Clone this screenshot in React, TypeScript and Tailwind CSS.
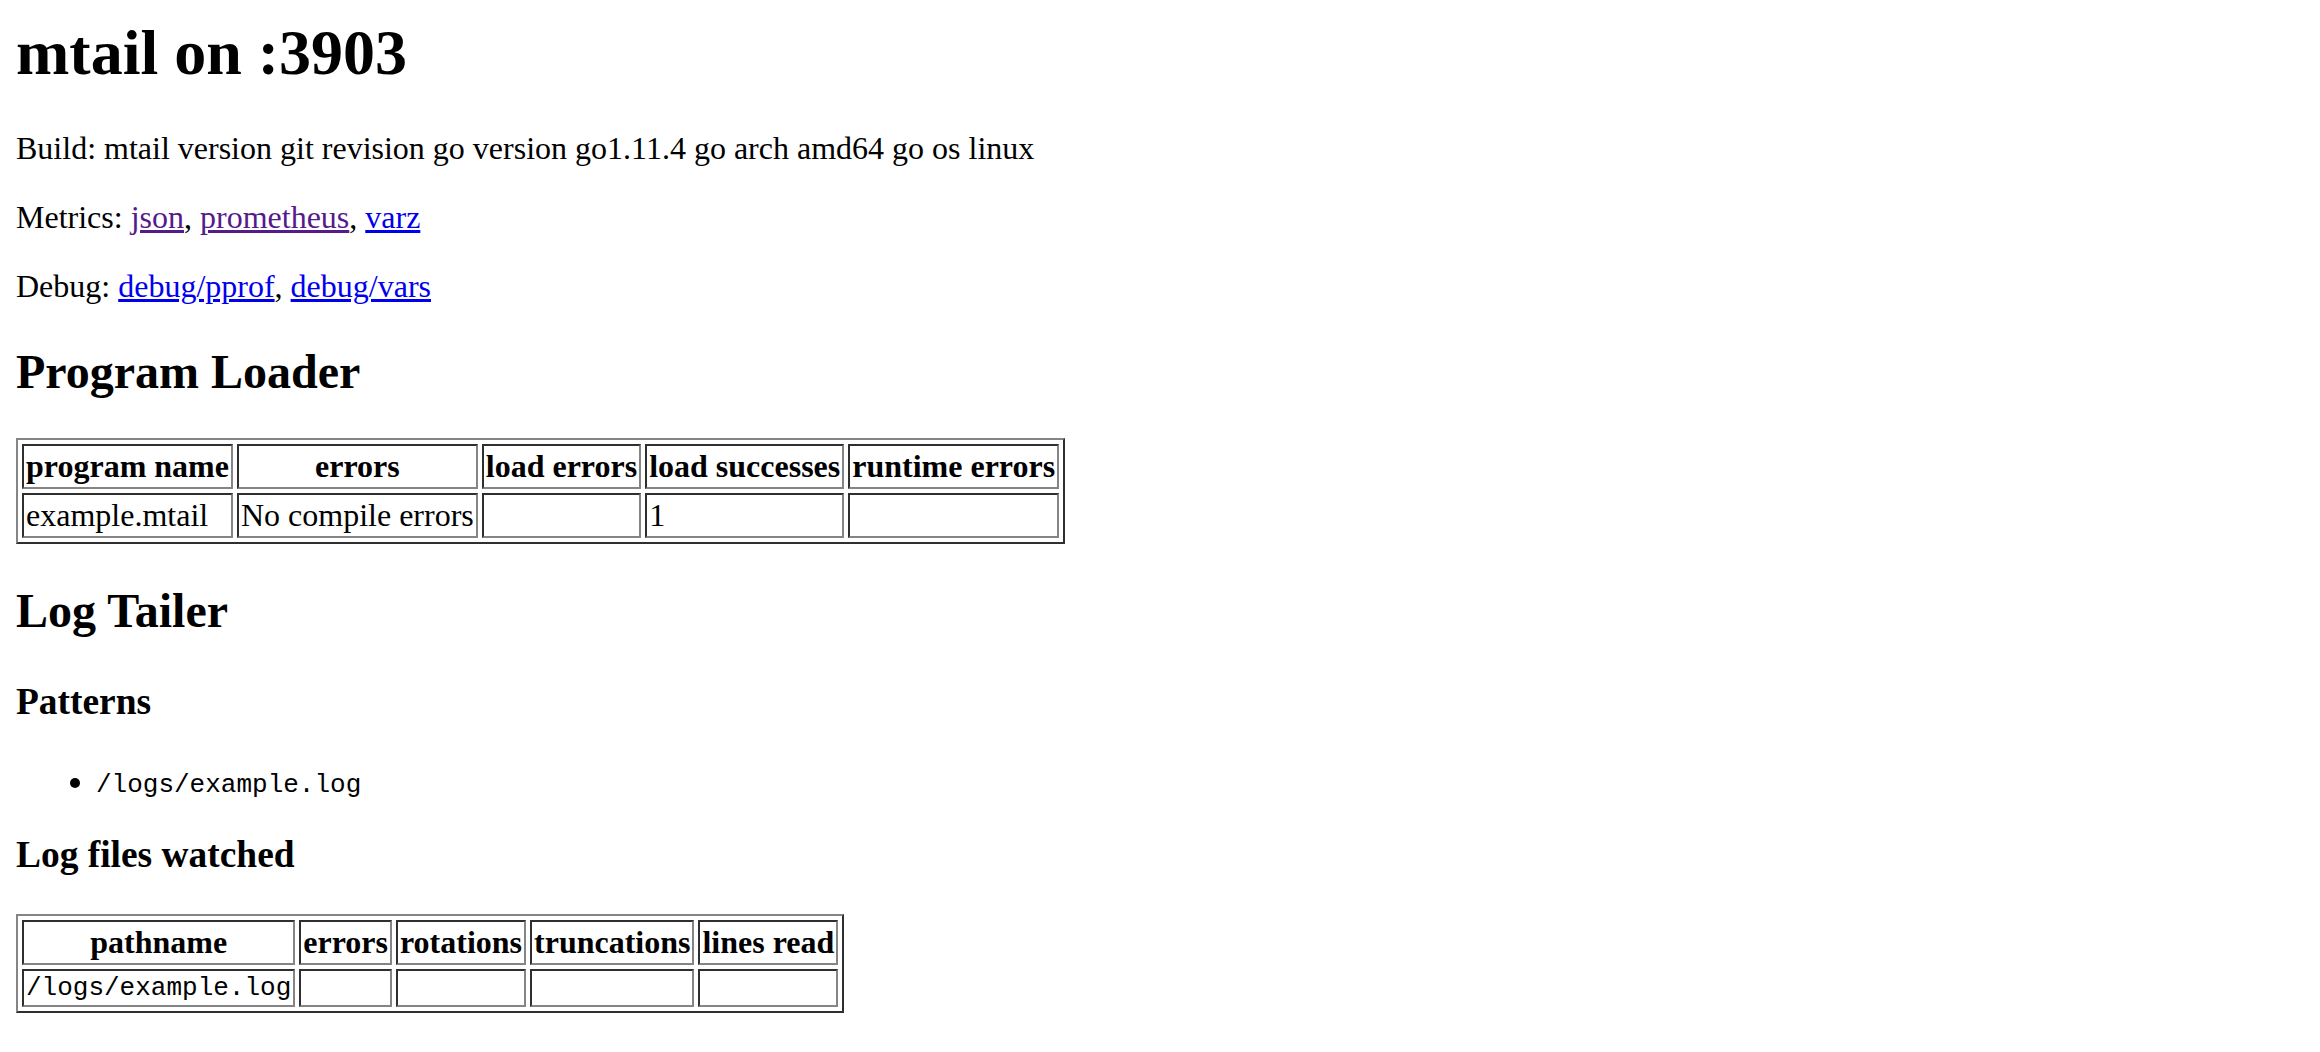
import React from "react";

const serif = "font-['Liberation_Serif','Times_New_Roman',serif]";
const mono = "font-['Liberation_Mono','Courier_New',monospace] text-[26px]";

const cellBorder =
  "border-2 border-t-[#2f2f2f] border-l-[#2f2f2f] border-b-[#858585] border-r-[#858585] p-[2px] align-middle";
const th = `${cellBorder} font-bold text-center`;
const td = `${cellBorder} text-left`;
const table =
  "border-separate border-spacing-[4px] border-2 border-t-[#858585] border-l-[#858585] border-b-[#2f2f2f] border-r-[#2f2f2f]";

const loaderCols = ["program name", "errors", "load errors", "load successes", "runtime errors"];
const loaderRows = [["example.mtail", "No compile errors", "", "1", ""]];

const watchCols = ["pathname", "errors", "rotations", "truncations", "lines read"];

export default function App() {
  return (
    <div className={`${serif} text-[32px] leading-[normal] text-black bg-white min-h-screen px-4 pt-4 pb-10`}>
      <h1 className="text-[64px] font-bold mb-[40px]">mtail on :3903</h1>

      <p className="mb-8">Build: mtail version git revision go version go1.11.4 go arch amd64 go os linux</p>

      <p className="mb-8">
        Metrics:{" "}
        <a href="#" className="underline text-[#551a8b]">json</a>,{" "}
        <a href="#" className="underline text-[#551a8b]">prometheus</a>,{" "}
        <a href="#" className="underline text-[#0000ee]">varz</a>
      </p>

      <p>
        Debug:{" "}
        <a href="#" className="underline text-[#0000ee]">debug/pprof</a>,{" "}
        <a href="#" className="underline text-[#0000ee]">debug/vars</a>
      </p>

      <h2 className="text-[48px] font-bold mt-[39px] mb-[39px]">Program Loader</h2>

      <table className={table}>
        <thead>
          <tr>
            {loaderCols.map((c) => (
              <th key={c} className={th}>{c}</th>
            ))}
          </tr>
        </thead>
        <tbody>
          {loaderRows.map((r, i) => (
            <tr key={i}>
              {r.map((v, j) => (
                <td key={j} className={td}>{v}</td>
              ))}
            </tr>
          ))}
        </tbody>
      </table>

      <h2 className="text-[48px] font-bold mt-[39px] mb-[42px]">Log Tailer</h2>

      <h3 className="text-[37.44px] font-bold mb-[37.44px]">Patterns</h3>
      <ul className="list-disc pl-20 mb-[33px]">
        <li className="pt-[3px]">
          <span className={mono}>/logs/example.log</span>
        </li>
      </ul>

      <h3 className="text-[37.44px] font-bold mb-[37.44px]">Log files watched</h3>
      <table className={table}>
        <thead>
          <tr>
            {watchCols.map((c) => (
              <th key={c} className={th}>{c}</th>
            ))}
          </tr>
        </thead>
        <tbody>
          <tr className={mono}>
            <td className={td}>/logs/example.log</td>
            <td className={td}></td>
            <td className={td}></td>
            <td className={td}></td>
            <td className={td}></td>
          </tr>
        </tbody>
      </table>
    </div>
  );
}
